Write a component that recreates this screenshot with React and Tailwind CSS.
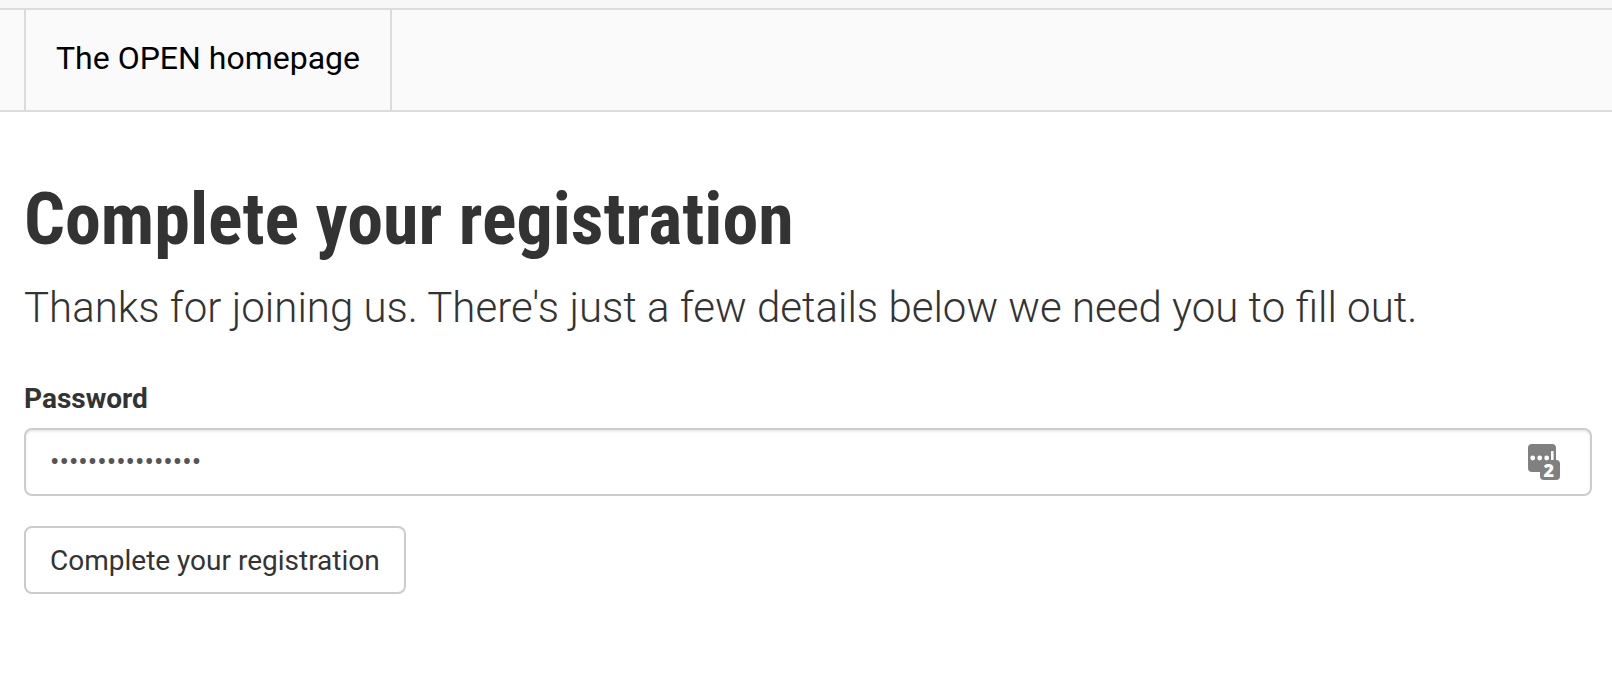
import { useState } from "react";

function PasswordManagerIcon() {
  return (
    <svg viewBox="0 0 32 36" className="h-9 w-8 overflow-visible" aria-hidden="true">
      <rect x="0" y="0" width="28" height="28" rx="4" fill="#808080" />
      <rect x="12" y="16" width="20" height="20" rx="4" fill="#808080" />
      <circle cx="4.7" cy="14" r="2.4" fill="#fff" />
      <circle cx="11.7" cy="14" r="2.4" fill="#fff" />
      <circle cx="18.7" cy="14" r="2.4" fill="#fff" />
      <rect x="23" y="7" width="2.6" height="9" rx="0.6" fill="#fff" />
      <text
        x="20.8"
        y="33"
        textAnchor="middle"
        fill="#fff"
        fontSize="18"
        fontWeight="800"
        fontFamily='"Open Sans", "Noto Sans", sans-serif'
      >
        2
      </text>
    </svg>
  );
}

export default function App() {
  const [password, setPassword] = useState("correcthorsebatt");

  return (
    <div className="bg-white font-[Roboto,sans-serif] text-[28px] leading-10 text-[#333333]">
      <header className="border-b-2 border-[#dcdcdc] bg-[#fafafa]">
        <div className="h-2.5 border-b-2 border-[#dcdcdc] bg-[#f7f7f7]" />
        <nav className="flex px-6">
          <a
            href="#home"
            className="border-x-2 border-[#dcdcdc] px-[30px] pt-6 pb-7 text-[32px] leading-[48px] text-black"
          >
            The OPEN homepage
          </a>
        </nav>
      </header>

      <main className="pt-[68px] pr-5 pb-10 pl-6">
        <h1 className="font-['Roboto_Condensed',Roboto,sans-serif] text-[72px] leading-[79px] font-bold">
          Complete your registration
        </h1>
        <p className="mt-5 text-[42px] leading-[58px] font-light">
          Thanks for joining us. There's just a few details below we need you to fill out.
        </p>

        <form className="mt-[42px]" onSubmit={(e) => e.preventDefault()}>
          <label htmlFor="password" className="block font-bold">
            Password
          </label>
          <div className="relative mt-[9px]">
            <input
              id="password"
              type="password"
              value={password}
              onChange={(e) => setPassword(e.target.value)}
              className="block h-[68px] w-full rounded-lg border-2 border-[#cccccc] bg-white pr-20 pb-0.5 pl-6 text-[#555555] shadow-[inset_0_2px_2px_rgba(0,0,0,0.075)] outline-none"
            />
            <span className="pointer-events-none absolute inset-y-0 right-8 flex items-center">
              <PasswordManagerIcon />
            </span>
          </div>
          <button
            type="submit"
            className="mt-[30px] h-[68px] rounded-lg border-2 border-[#cccccc] bg-white px-6 pt-0.5"
          >
            Complete your registration
          </button>
        </form>
      </main>
    </div>
  );
}
